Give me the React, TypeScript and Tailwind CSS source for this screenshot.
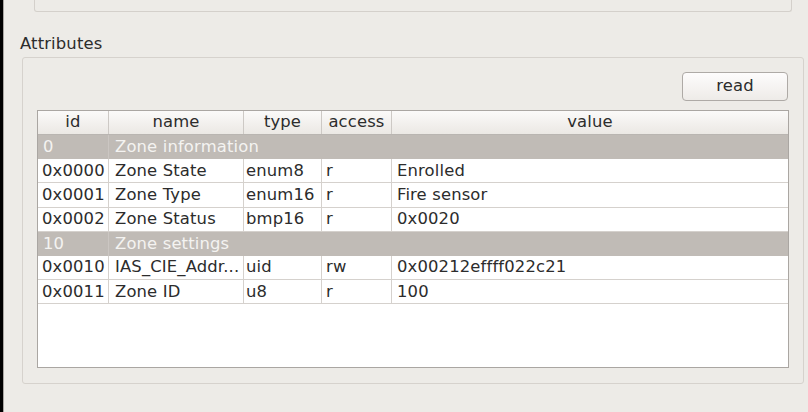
import React from 'react';

type Row =
  | { kind: 'group'; id: string; label: string }
  | { kind: 'attr'; id: string; name: string; type: string; access: string; value: string };

const rows: Row[] = [
  { kind: 'group', id: '0', label: 'Zone information' },
  { kind: 'attr', id: '0x0000', name: 'Zone State', type: 'enum8', access: 'r', value: 'Enrolled' },
  { kind: 'attr', id: '0x0001', name: 'Zone Type', type: 'enum16', access: 'r', value: 'Fire sensor' },
  { kind: 'attr', id: '0x0002', name: 'Zone Status', type: 'bmp16', access: 'r', value: '0x0020' },
  { kind: 'group', id: '10', label: 'Zone settings' },
  { kind: 'attr', id: '0x0010', name: 'IAS_CIE_Addr...', type: 'uid', access: 'rw', value: '0x00212effff022c21' },
  { kind: 'attr', id: '0x0011', name: 'Zone ID', type: 'u8', access: 'r', value: '100' },
];

function HeaderCell({ label, className }: { label: string; className: string }) {
  return (
    <div className={`flex items-center justify-center border-r border-[#cdc9c5] ${className}`}>
      {label}
    </div>
  );
}

function TableRow({ row }: { row: Row }) {
  if (row.kind === 'group') {
    return (
      <div className="flex h-[24.2px] bg-[#c0bbb6] text-[#f4f3f1] leading-none">
        <div className="flex w-[71px] items-center border-r border-[#cbc6c2] pl-[5px]">{row.id}</div>
        <div className="flex flex-1 items-center pl-[6px]">{row.label}</div>
      </div>
    );
  }
  return (
    <div className="flex h-[24.2px] border-b border-[#d5d1cd] bg-white leading-none">
      <div className="flex w-[71px] items-center border-r border-[#d5d1cd] pl-[4px]">{row.id}</div>
      <div className="flex w-[135px] items-center border-r border-[#d5d1cd] pl-[6px]">{row.name}</div>
      <div className="flex w-[78px] items-center border-r border-[#d5d1cd] pl-[2px]">{row.type}</div>
      <div className="flex w-[70px] items-center border-r border-[#d5d1cd] pl-[4px]">{row.access}</div>
      <div className="flex flex-1 items-center pl-[5px]">{row.value}</div>
    </div>
  );
}

export default function App() {
  return (
    <div
      className="flex h-[412px] w-[808px] overflow-hidden bg-[#edebe7] text-[16.4px] tracking-[0.15px] text-[#2c2c2c]"
      style={{ fontFamily: '"DejaVu Sans", Verdana, sans-serif' }}
    >
      <div className="w-[3px] bg-black" />
      <div className="w-[1px] bg-[#a9a6a2]" />
      <div className="flex flex-1 flex-col">
        <div className="ml-[30px] h-[12px] w-[758px] rounded-b-[3px] border-x border-b border-[#d4d0cb]" />

        <div className="ml-[16px] mt-[22px] h-[19px] leading-[19px]">Attributes</div>

        <div className="ml-[18px] mt-[4px] flex h-[327px] w-[782px] flex-col rounded-[3px] border border-[#d6d2cd] px-[14px] pb-[15px] pt-[14px]">
          <div className="flex justify-end pr-[1px]">
            <button className="flex h-[29px] w-[106px] items-center justify-center rounded-[4px] border border-[#aeaaa6] bg-gradient-to-b from-[#fdfcfc] to-[#eeebe8] leading-none text-[#2c2c2c]">
              read
            </button>
          </div>

          <div className="mt-[9px] flex flex-1 flex-col border border-[#aaa6a2] bg-white">
            <div className="flex h-[24px] border-b border-[#b9b5b1] bg-gradient-to-b from-[#fbfaf9] to-[#ebe8e4] leading-none">
              <HeaderCell label="id" className="w-[71px]" />
              <HeaderCell label="name" className="w-[135px]" />
              <HeaderCell label="type" className="w-[78px]" />
              <HeaderCell label="access" className="w-[70px]" />
              <div className="flex flex-1 items-center justify-center">value</div>
            </div>
            {rows.map((row, i) => (
              <TableRow key={i} row={row} />
            ))}
          </div>
        </div>
      </div>
    </div>
  );
}
